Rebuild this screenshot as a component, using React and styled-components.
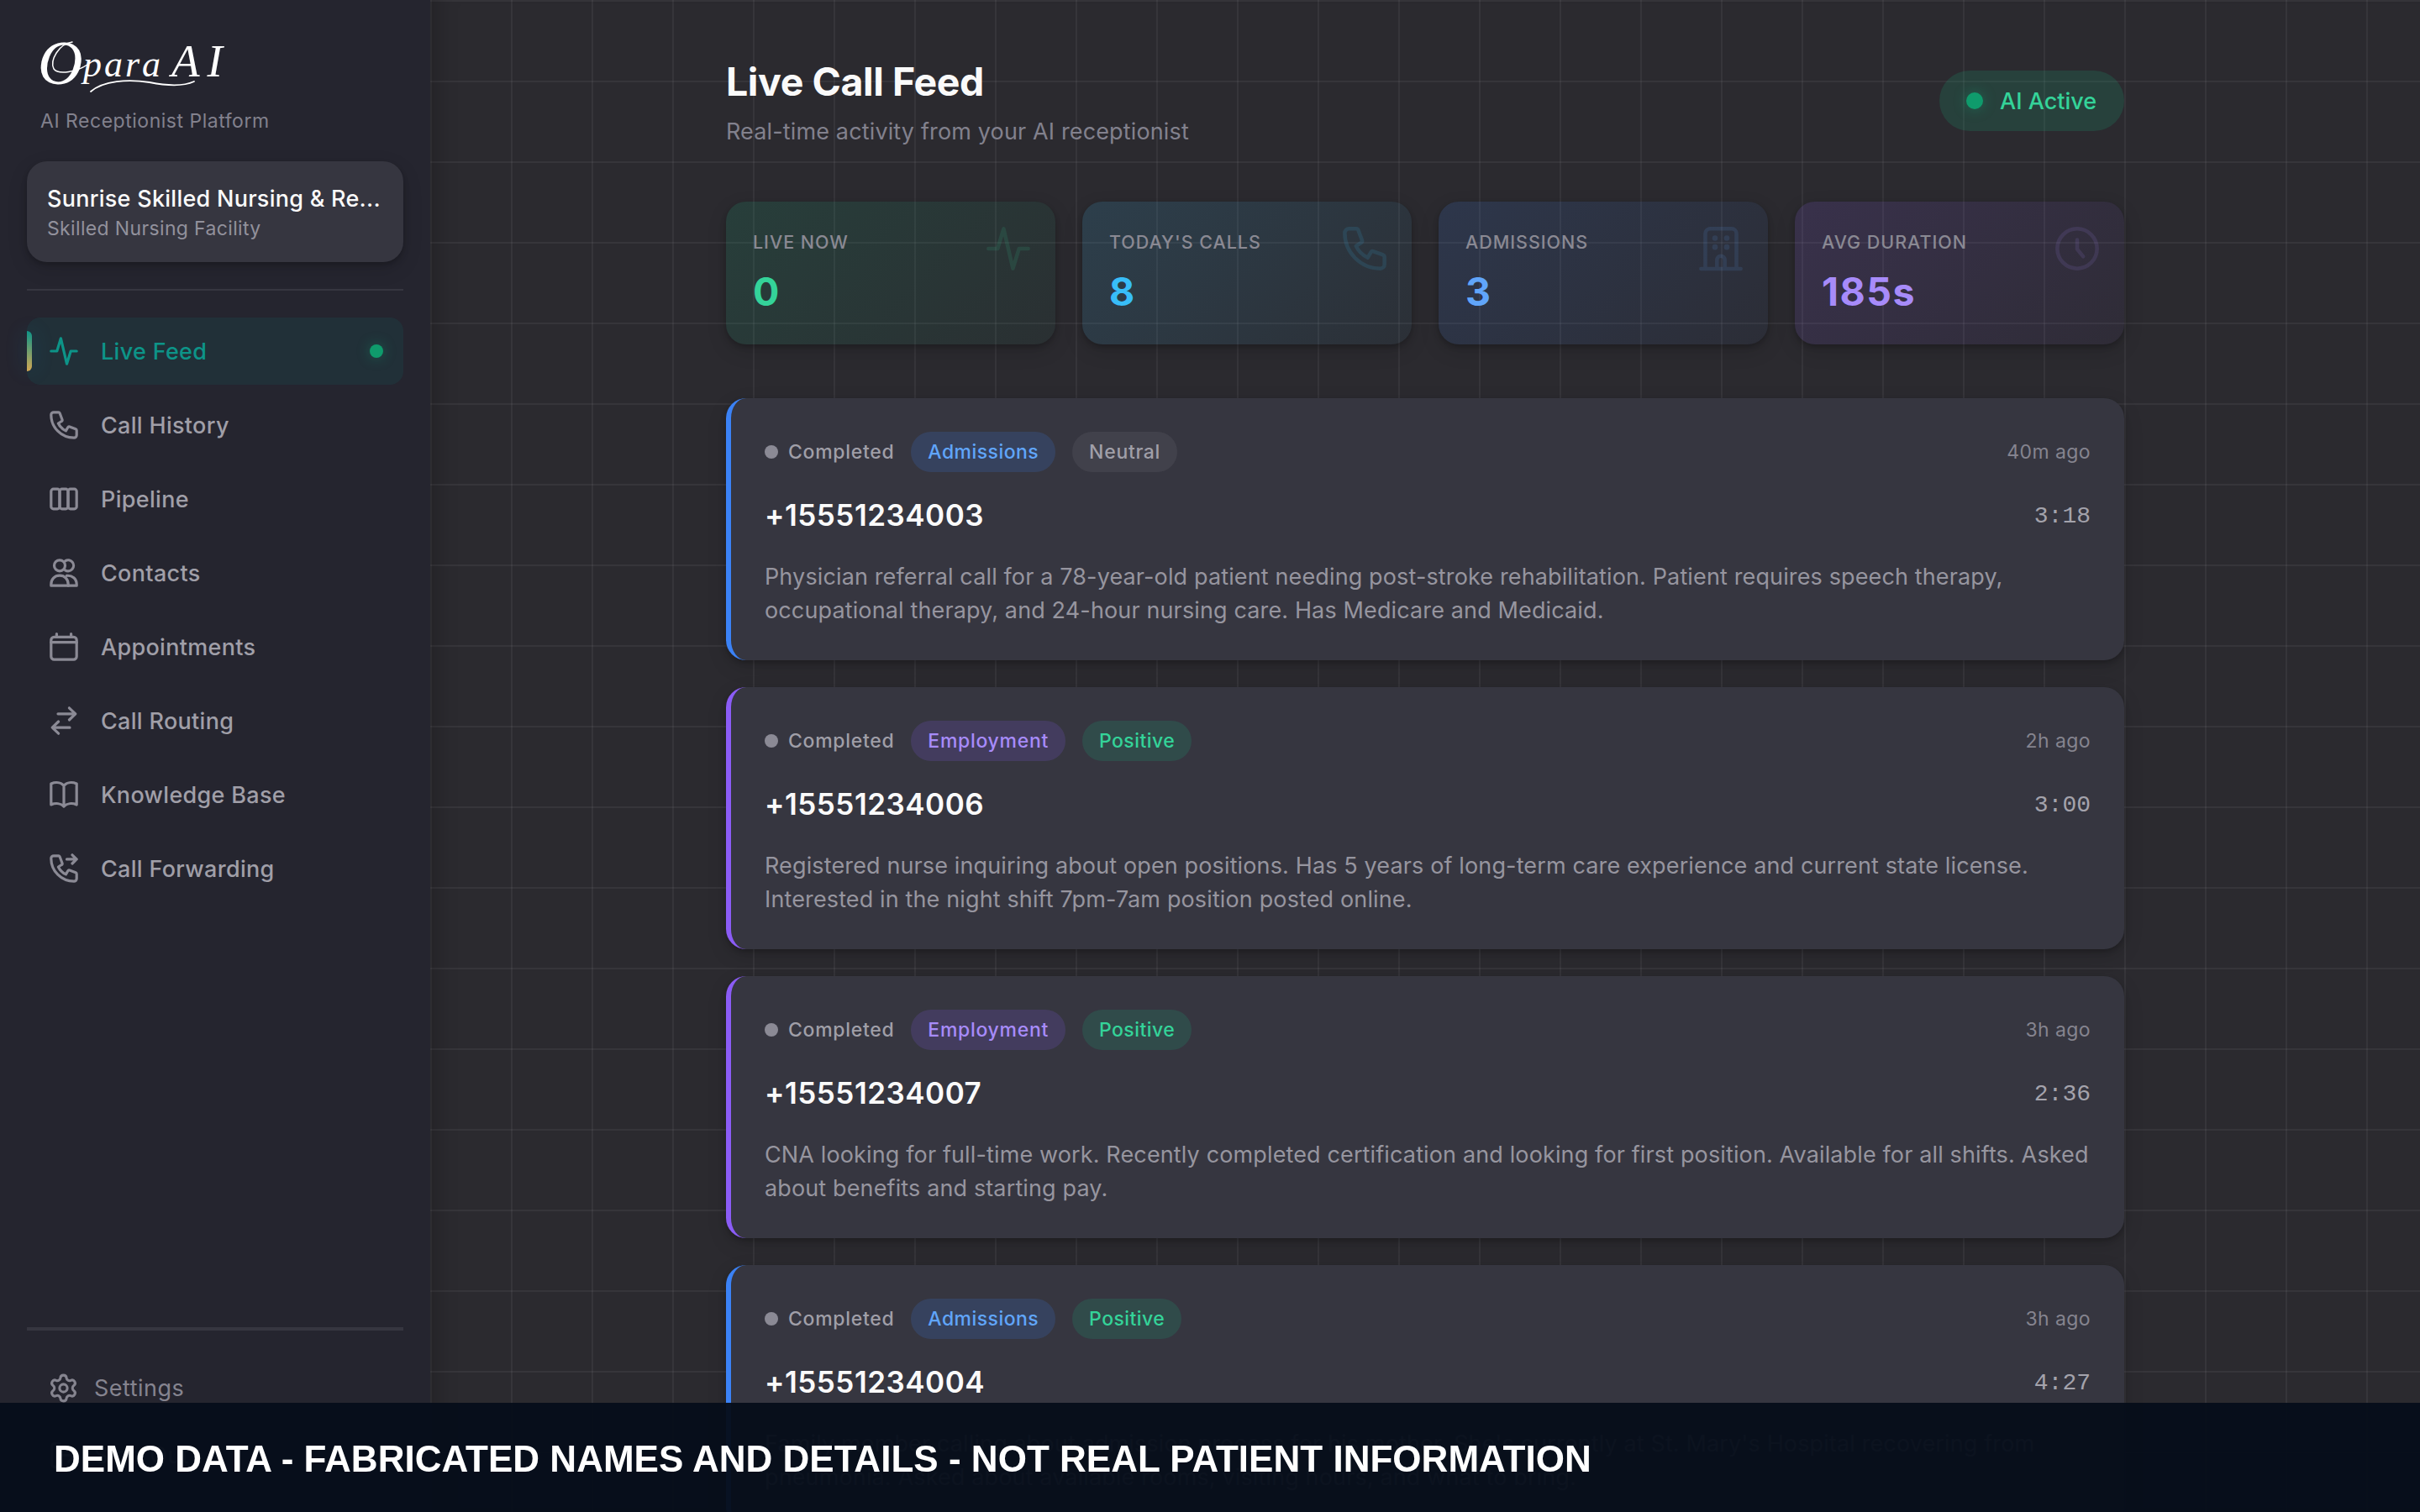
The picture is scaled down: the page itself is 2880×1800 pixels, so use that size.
import React from 'react';
import styled, { createGlobalStyle, css } from 'styled-components';
import { Settings, LogOut } from 'lucide-react';

const GlobalStyle = createGlobalStyle`
  * { box-sizing: border-box; margin: 0; padding: 0; }
  body {
    background: #2b2a2f;
    overflow: hidden;
    font-family: Inter, 'Liberation Sans', sans-serif;
    -webkit-font-smoothing: antialiased;
  }
`;

const elevated = css`
  box-shadow: 0 3px 6px rgba(0, 0, 0, 0.22), 0 8px 24px rgba(0, 0, 0, 0.12);
`;

const Shell = styled.div`
  display: grid;
  grid-template-columns: 512px 1fr;
  grid-template-rows: 1800px;
  width: 2880px;
  height: 1800px;
  overflow: hidden;
`;

/* Sidebar */

const Sidebar = styled.aside`
  display: flex;
  flex-direction: column;
  padding: 48px 32px 28px;
  background: #25252f;
`;

const Brand = styled.div`
  padding: 0 16px;
`;

const LogoMark = styled.svg`
  display: block;
  width: 224px;
  height: 64px;
  overflow: visible;
  font-family: 'Liberation Serif', serif;
  font-style: italic;
`;

const Tagline = styled.p`
  margin-top: 16px;
  font-size: 23px;
  line-height: 32px;
  letter-spacing: 0.52px;
  color: #82818d;
`;

const Facility = styled.div`
  margin-top: 32px;
  height: 120px;
  padding: 25px 24px 0;
  border-radius: 24px;
  background: #363640;
  ${elevated}
`;

const FacilityName = styled.div`
  overflow: hidden;
  white-space: nowrap;
  font-size: 27px;
  font-weight: 500;
  line-height: 40px;
  letter-spacing: 0.26px;
  color: #fafafa;
`;

const FacilityType = styled.div`
  font-size: 23px;
  line-height: 31px;
  letter-spacing: 0.35px;
  color: #92919c;
`;

const Divider = styled.hr`
  flex: none;
  height: ${p => p.$size}px;
  margin-top: ${p => p.$gap || 0}px;
  border: 0;
  background: #363640;
`;

const Nav = styled.nav`
  display: flex;
  flex-direction: column;
  gap: 8px;
  margin-top: 32px;
`;

const NavItem = styled.a`
  position: relative;
  display: flex;
  align-items: center;
  gap: 26px;
  height: 80px;
  padding: 0 24px 0 26px;
  border-radius: 16px;
  font-size: 27px;
  font-weight: 500;
  letter-spacing: 0.31px;
  color: ${p => (p.$active ? '#0d9488' : '#a09fa8')};
  background: ${p => (p.$active ? 'rgba(13, 148, 136, 0.11)' : 'transparent')};
  svg { color: ${p => (p.$active ? '#0d9488' : '#8b8a95')}; }
`;

const ActiveBar = styled.span`
  position: absolute;
  left: 0;
  top: 16px;
  width: 6px;
  height: 48px;
  border-radius: 0 6px 6px 0;
  background: linear-gradient(180deg, #0d9488, #d4a853);
  box-shadow: 0 0 24px rgba(14, 140, 200, 0.3);
`;

const LiveDot = styled.span`
  width: ${p => p.$size}px;
  height: ${p => p.$size}px;
  border-radius: 50%;
  background: #0f9b6c;
  box-shadow: 0 0 16px rgba(16, 185, 129, 0.35);
`;

const NavDot = styled(LiveDot)`
  margin-left: auto;
`;

const SidebarFoot = styled.div`
  margin-top: auto;
`;

const FootLinks = styled.div`
  margin-top: 28px;
`;

const FootLink = styled.a`
  display: flex;
  align-items: center;
  gap: 18px;
  height: 80px;
  padding-left: 25px;
  font-size: 27px;
  letter-spacing: 0.5px;
  color: #85848f;
`;

/* Main column */

const Main = styled.main`
  padding: 64px 352px 0;
  background-color: #2b2a2f;
  background-image:
    linear-gradient(rgba(255, 255, 255, 0.05) 2px, transparent 2px),
    linear-gradient(90deg, rgba(255, 255, 255, 0.05) 2px, transparent 2px);
  background-size: 96px 96px;
  box-shadow: inset 28px 0 28px -24px rgba(0, 0, 0, 0.25);
`;

const Header = styled.header`
  display: flex;
  align-items: center;
  justify-content: space-between;
  height: 112px;
`;

const Title = styled.h1`
  font-size: 46.5px;
  font-weight: 700;
  line-height: 66px;
  letter-spacing: -0.43px;
  color: #fafafa;
`;

const Subtitle = styled.p`
  margin-top: 7px;
  margin-bottom: -1px;
  font-size: 27px;
  line-height: 40px;
  letter-spacing: 0.14px;
  color: #82818d;
`;

const ActivePill = styled.div`
  display: flex;
  align-items: center;
  gap: 20px;
  width: 220px;
  height: 72px;
  padding: 0 32px;
  border-radius: 36px;
  white-space: nowrap;
  font-size: 27px;
  font-weight: 500;
  color: #34d399;
  background: rgba(16, 185, 129, 0.16);
`;

const Stats = styled.section`
  display: grid;
  grid-template-columns: repeat(4, 1fr);
  gap: 32px;
  margin-top: 64px;
`;

const StatCard = styled.div`
  display: flex;
  justify-content: space-between;
  height: 170px;
  padding: 28px 28px 32px 32px;
  border-radius: 24px;
  background: linear-gradient(135deg, rgba(${p => p.$rgb}, 0.14), rgba(${p => p.$rgb}, 0.04));
  ${elevated}
  svg { color: ${p => p.$ink}; opacity: 0.12; }
`;

const StatLabel = styled.div`
  margin-top: 4px;
  font-size: 21.5px;
  font-weight: 500;
  line-height: 32px;
  letter-spacing: 0.96px;
  color: #8a8993;
`;

const StatValue = styled.div`
  margin-top: 12px;
  font-size: 46.5px;
  font-weight: 700;
  line-height: 62px;
  letter-spacing: ${p => (p.$wide ? 1.5 : 0)}px;
  color: ${p => p.$color};
`;

const Feed = styled.section`
  display: flex;
  flex-direction: column;
  gap: 32px;
  margin-top: 64px;
`;

const CallCard = styled.article`
  display: flex;
  flex-direction: column;
  height: 312px;
  padding: 40px;
  border-left: 6px solid ${p => p.$accent};
  border-radius: 24px;
  background: #363640;
  ${elevated}
`;

const Row = styled.div`
  display: flex;
  flex: none;
  align-items: center;
  justify-content: space-between;
  height: ${p => p.$height}px;
  margin-bottom: ${p => p.$gap}px;
`;

const Tags = styled.div`
  display: flex;
  align-items: center;
  gap: 20px;
  font-size: 23px;
  font-weight: 500;
  line-height: 48px;
  letter-spacing: 0.7px;
`;

const Status = styled.span`
  display: flex;
  align-items: center;
  gap: 12px;
  color: #a09fa8;
  &::before {
    content: '';
    width: 16px;
    height: 16px;
    border-radius: 50%;
    background: #8b8a95;
  }
`;

const tones = {
  admissions: ['#60a5fa', 'rgba(59, 130, 246, 0.17)', '0.45px'],
  employment: ['#a78bfa', 'rgba(139, 92, 246, 0.17)', '0.7px'],
  positive: ['#34d399', 'rgba(16, 185, 129, 0.16)', '0.45px'],
  neutral: ['#a09fa8', 'rgba(150, 149, 158, 0.12)', '0.68px'],
};

const Tag = styled.span`
  height: 48px;
  padding: 0 20px;
  border-radius: 24px;
  color: ${p => tones[p.$tone][0]};
  background: ${p => tones[p.$tone][1]};
  letter-spacing: ${p => tones[p.$tone][2]};
`;

const Ago = styled.time`
  font-size: 23px;
  letter-spacing: 0.42px;
  color: #85848f;
`;

const Caller = styled.h2`
  font-size: 35px;
  font-weight: 600;
  line-height: 54px;
  letter-spacing: 0.5px;
  color: #fafafa;
`;

const Duration = styled.span`
  padding-top: 4px;
  font-family: 'Liberation Mono', monospace;
  font-size: 28px;
  line-height: 50px;
  color: #a4a3ac;
`;

const Summary = styled.p`
  white-space: nowrap;
  font-size: 27px;
  line-height: 40px;
  letter-spacing: 0.13px;
  color: #96959f;
`;

const DemoBanner = styled.div`
  position: fixed;
  left: 0;
  right: 0;
  bottom: 0;
  display: flex;
  align-items: center;
  height: 130px;
  padding: 4px 64px 0;
  white-space: nowrap;
  font: 700 44px 'Liberation Sans', sans-serif;
  letter-spacing: 0.02px;
  color: #fff;
  background: rgba(6, 14, 26, 0.96);
`;

/* Icons, drawn on a 36 unit grid */

const handset = 'M6 2.8h5.6a1.6 1.6 0 0 1 1.5 1l2.9 7.7c.3.8 0 1.6-.7 2L11.4 16c2 4.2 4.8 6.9 9 8.9l2.4-4.1c.4-.7 1.2-1 2-.7l7.3 2.7c.7.3 1.1.9 1.1 1.6V30c0 1.8-1.4 3.2-3.2 3.2C15 33.2 2.8 21 2.8 6c0-1.8 1.4-3.2 3.2-3.2z';

const glyphs = {
  activity: <path d="M2.8 18H9.8L14.4 2.8 21.5 33.2 26.2 18H33.2" />,
  phone: <path d={handset} />,
  pipeline: (
    <>
      <rect x="2.8" y="6.2" width="10.2" height="23.6" rx="2.8" />
      <rect x="13" y="6.2" width="10" height="23.6" rx="2.8" />
      <rect x="23" y="6.2" width="10.2" height="23.6" rx="2.8" />
    </>
  ),
  contacts: (
    <>
      <circle cx="13" cy="9.3" r="6.5" />
      <path d="M19.6 3.8a6.5 6.5 0 1 1 0 11" />
      <path d="M2.8 33.2v-1.4C2.8 25.4 7 21.2 13 21.2s10.2 4.2 10.2 10.6v1.4z" />
      <path d="M21.4 21.3c6.6-.6 11.8 3.6 11.8 10.5v1.4h-10" />
    </>
  ),
  calendar: (
    <>
      <rect x="2.8" y="6.4" width="30.4" height="26.8" rx="3.6" />
      <path d="M2.8 12.7H33.2M9.4 2.6V6M26.6 2.6V6" />
    </>
  ),
  routing: <path d="M11 9.8H31.5M24.4 2.8 31.8 9.8 24.4 17M25 26.2H4.5M11.6 19 4.2 26.2 11.6 33.2" />,
  book: <path d="M18 7.4C14.4 3.2 8.2 2.8 2.8 5V30C8.2 27.8 14.4 28.4 18 32.2C21.6 28.4 27.8 27.8 33.2 30V5C27.8 2.8 21.6 3.2 18 7.4V32" />,
  forward: (
    <>
      <path d={handset} />
      <path d="M21.5 6.9H33M28 1.8 33.2 6.9 28 12" />
    </>
  ),
  building: (
    <>
      <path d="M2.8 33.4H33.2M6.1 33V6.4C6.1 4.4 7.7 2.8 9.7 2.8H26.3C28.3 2.8 29.9 4.4 29.9 6.4V33M15 33V26.6a3 3 0 0 1 6 0V33" />
      <g fill="currentColor" stroke="none">
        <circle cx="13.5" cy="10" r="2.1" />
        <circle cx="22.5" cy="10" r="2.1" />
        <circle cx="13.5" cy="16.8" r="2.1" />
        <circle cx="22.5" cy="16.8" r="2.1" />
      </g>
    </>
  ),
  clock: (
    <>
      <circle cx="18" cy="18" r="15.2" />
      <path d="M18 11.2V18.4L22.6 24" />
    </>
  ),
};

function Icon({ name, size = 36, weight = 3.2 }) {
  return (
    <svg
      width={size}
      height={size}
      viewBox="0 0 36 36"
      fill="none"
      stroke="currentColor"
      strokeWidth={weight}
      strokeLinecap="round"
      strokeLinejoin="round"
    >
      {glyphs[name]}
    </svg>
  );
}

function Logo() {
  return (
    <LogoMark viewBox="0 0 224 64" fill="#fff" aria-label="Opara AI">
      <text x="-3" y="52" fontSize="74">O</text>
      <text x="51" y="43" fontSize="44" letterSpacing="3">para</text>
      <text x="156" y="43" fontSize="55" letterSpacing="9">AI</text>
      <g fill="none" stroke="#fff" strokeLinecap="round">
        <path d="M60 61C75 48 104 46 130 50C150 54 170 55 183 49" strokeWidth="1.8" />
        <path d="M38 2C22 4 11 24 16 34C22 42 44 37 56 29" strokeWidth="1.5" />
      </g>
    </LogoMark>
  );
}

const navItems = [
  ['Live Feed', 'activity'],
  ['Call History', 'phone'],
  ['Pipeline', 'pipeline'],
  ['Contacts', 'contacts'],
  ['Appointments', 'calendar'],
  ['Call Routing', 'routing'],
  ['Knowledge Base', 'book'],
  ['Call Forwarding', 'forward'],
];

const stats = [
  ['LIVE NOW', '0', 'activity', '16, 185, 129', '#34d399'],
  ["TODAY'S CALLS", '8', 'phone', '56, 189, 248', '#38bdf8'],
  ['ADMISSIONS', '3', 'building', '59, 130, 246', '#60a5fa'],
  ['AVG DURATION', '185s', 'clock', '139, 92, 246', '#a78bfa'],
];

const calls = [
  {
    phone: '+15551234003', type: 'Admissions', mood: 'Neutral', ago: '40m ago', duration: '3:18',
    lines: [
      'Physician referral call for a 78-year-old patient needing post-stroke rehabilitation. Patient requires speech therapy,',
      'occupational therapy, and 24-hour nursing care. Has Medicare and Medicaid.',
    ],
  },
  {
    phone: '+15551234006', type: 'Employment', mood: 'Positive', ago: '2h ago', duration: '3:00',
    lines: [
      'Registered nurse inquiring about open positions. Has 5 years of long-term care experience and current state license.',
      'Interested in the night shift 7pm-7am position posted online.',
    ],
  },
  {
    phone: '+15551234007', type: 'Employment', mood: 'Positive', ago: '3h ago', duration: '2:36',
    lines: [
      'CNA looking for full-time work. Recently completed certification and looking for first position. Available for all shifts. Asked',
      'about benefits and starting pay.',
    ],
  },
  {
    phone: '+15551234004', type: 'Admissions', mood: 'Positive', ago: '3h ago', duration: '4:27',
    lines: [
      "Family member calling about admission process for his mother. She's currently at St. Mary's Hospital recovering from",
      'pneumonia. Asked about available rooms, visiting hours, and what to bring.',
    ],
  },
];

const accents = { Admissions: '#3b82f6', Employment: '#8b5cf6' };

function Call({ call }) {
  return (
    <CallCard $accent={accents[call.type]}>
      <Row $height={48} $gap={24}>
        <Tags>
          <Status>Completed</Status>
          <Tag $tone={call.type.toLowerCase()}>{call.type}</Tag>
          <Tag $tone={call.mood.toLowerCase()}>{call.mood}</Tag>
        </Tags>
        <Ago>{call.ago}</Ago>
      </Row>
      <Row $height={54} $gap={27}>
        <Caller>{call.phone}</Caller>
        <Duration>{call.duration}</Duration>
      </Row>
      <Summary>
        {call.lines[0]}
        <br />
        {call.lines[1]}
      </Summary>
    </CallCard>
  );
}

export default function App() {
  return (
    <>
      <GlobalStyle />
      <Shell>
        <Sidebar>
          <Brand>
            <Logo />
            <Tagline>AI Receptionist Platform</Tagline>
          </Brand>
          <Facility>
            <FacilityName>Sunrise Skilled Nursing &amp; Re...</FacilityName>
            <FacilityType>Skilled Nursing Facility</FacilityType>
          </Facility>
          <Divider $size={2} $gap={32} />
          <Nav>
            {navItems.map(([label, icon], i) => (
              <NavItem key={label} $active={i === 0}>
                {i === 0 && <ActiveBar />}
                <Icon name={icon} />
                {label}
                {i === 0 && <NavDot $size={16} />}
              </NavItem>
            ))}
          </Nav>
          <SidebarFoot>
            <Divider $size={4} />
            <FootLinks>
              <FootLink><Settings size={37} />Settings</FootLink>
              <FootLink><LogOut size={37} />Sign Out</FootLink>
            </FootLinks>
          </SidebarFoot>
        </Sidebar>
        <Main>
          <Header>
            <div>
              <Title>Live Call Feed</Title>
              <Subtitle>Real-time activity from your AI receptionist</Subtitle>
            </div>
            <ActivePill><LiveDot $size={20} />AI Active</ActivePill>
          </Header>
          <Stats>
            {stats.map(([label, value, icon, rgb, color]) => (
              <StatCard key={label} $rgb={rgb} $ink={color}>
                <div>
                  <StatLabel>{label}</StatLabel>
                  <StatValue $color={color} $wide={value.length > 1}>{value}</StatValue>
                </div>
                <Icon name={icon} size={56} weight={2.9} />
              </StatCard>
            ))}
          </Stats>
          <Feed>
            {calls.map(call => <Call key={call.phone} call={call} />)}
          </Feed>
        </Main>
      </Shell>
      <DemoBanner>DEMO DATA - FABRICATED NAMES AND DETAILS - NOT REAL PATIENT INFORMATION</DemoBanner>
    </>
  );
}
